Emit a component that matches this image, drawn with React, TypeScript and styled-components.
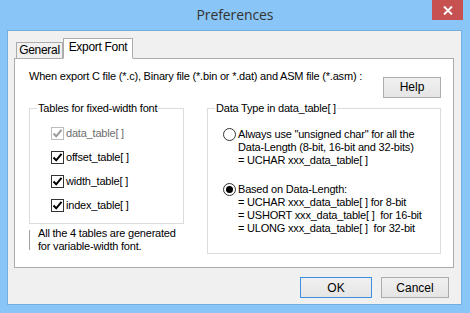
import React from "react";
import styled, { createGlobalStyle } from "styled-components";

const GlobalStyle = createGlobalStyle`
  html, body {
    margin: 0;
    padding: 0;
    background: #89c5f6;
  }
`;

const Frame = styled.div`
  width: 470px;
  height: 313px;
  background: #89c5f6;
  display: flex;
  flex-direction: column;
  font-family: "Liberation Sans", Arial, sans-serif;
  font-size: 11px;
  letter-spacing: -0.2px;
  color: #000;
  box-sizing: border-box;
`;

const TitleBar = styled.div`
  height: 30px;
  display: grid;
  grid-template-columns: 1fr auto 1fr;
  flex-shrink: 0;
`;

const Title = styled.div`
  grid-column: 2;
  font-family: "Open Sans", "Noto Sans", sans-serif;
  font-size: 14px;
  color: #333;
  line-height: 30px;
  letter-spacing: -0.1px;
`;

const CloseButton = styled.div`
  grid-column: 3;
  justify-self: end;
  width: 31px;
  height: 20px;
  margin-right: 7px;
  background: #c75050;
  display: flex;
  align-items: center;
  justify-content: center;
`;

const Client = styled.div`
  flex: 1;
  margin: 0 8px 8px 7px;
  background: #f0f0f0;
  border: 1px solid #74aede;
  padding: 7px 7px 0 6px;
  display: flex;
  flex-direction: column;
`;

const TabStrip = styled.div`
  display: flex;
  align-items: flex-end;
  padding-left: 2px;
  height: 20px;
`;

const Tab = styled.div<{ $active?: boolean; $width: number }>`
  position: relative;
  z-index: 1;
  box-sizing: border-box;
  width: ${(p) => p.$width}px;
  height: ${(p) => (p.$active ? "21px" : "16px")};
  margin-bottom: ${(p) => (p.$active ? "-1px" : "0")};
  border: 1px solid #acacac;
  border-bottom: ${(p) => (p.$active ? "1px solid #fff" : "none")};
  background: ${(p) => (p.$active ? "#fff" : "#f0f0f0")};
  line-height: ${(p) => (p.$active ? "17px" : "15px")};
  font-size: 12px;
  letter-spacing: -0.3px;
  text-align: center;
  white-space: nowrap;
`;

const Panel = styled.div`
  box-sizing: border-box;
  height: 210px;
  background: #fff;
  border: 1px solid #acacac;
  padding: 11px 12px 0 14px;
  display: flex;
  flex-direction: column;
`;

const TopRow = styled.div`
  display: flex;
  justify-content: space-between;
  align-items: flex-start;
  line-height: 13px;
  white-space: nowrap;
`;

const Button = styled.div<{ $default?: boolean; $width: number }>`
  box-sizing: border-box;
  width: ${(p) => p.$width}px;
  height: 21px;
  border: 1px solid ${(p) => (p.$default ? "#3c8fdf" : "#acacac")};
  background: linear-gradient(#f0f0f0, #e5e5e5);
  display: flex;
  align-items: center;
  justify-content: center;
  font-size: 12px;
  letter-spacing: 0;
`;

const HelpButton = styled(Button)`
  margin-top: 7px;
`;

const Columns = styled.div`
  display: flex;
  gap: 23px;
  margin-top: 4px;
  align-items: flex-start;
`;

const LeftColumn = styled.div`
  width: 155px;
  display: flex;
  flex-direction: column;
`;

const Group = styled.fieldset<{ $bottom: number }>`
  margin: 0;
  padding: 0 6px ${(p) => p.$bottom}px 7px;
  border: 1px solid #dcdcdc;
  min-width: 0;
  flex: 1;
  line-height: 13px;
  white-space: nowrap;
`;

const Caption = styled.legend`
  padding: 0 1px;
  line-height: 13px;
`;

const CheckList = styled.div`
  margin-left: 14px;
  padding-top: 6px;
  display: flex;
  flex-direction: column;
`;

const CheckRow = styled.div<{ $disabled?: boolean }>`
  height: 24px;
  display: flex;
  align-items: center;
  gap: 2px;
  color: ${(p) => (p.$disabled ? "#6d6d6d" : "#000")};
`;

const Box = styled.div<{ $disabled?: boolean }>`
  box-sizing: border-box;
  width: 13px;
  height: 13px;
  border: 1px solid ${(p) => (p.$disabled ? "#bcbcbc" : "#333")};
  background: #fff;
  display: flex;
  align-items: center;
  justify-content: center;
`;

const Note = styled.div`
  display: flex;
  margin-top: 3px;
  line-height: 13px;
`;

const Rule = styled.div`
  width: 1px;
  height: 20px;
  margin-top: 3px;
  background: #a0a0a0;
  margin-right: 8px;
`;

const RadioList = styled.div`
  margin-left: 8px;
  padding-top: 13px;
  display: flex;
  flex-direction: column;
  gap: 16px;
`;

const RadioRow = styled.div`
  display: flex;
  align-items: flex-start;
  gap: 2px;
  line-height: 13px;
`;

const Circle = styled.div<{ $checked?: boolean }>`
  box-sizing: border-box;
  width: 13px;
  height: 13px;
  flex-shrink: 0;
  border-radius: 50%;
  border: 1px solid #333;
  background: #fff;
  display: flex;
  align-items: center;
  justify-content: center;
  &::after {
    content: "";
    display: ${(p) => (p.$checked ? "block" : "none")};
    width: 7px;
    height: 7px;
    border-radius: 50%;
    background: #000;
  }
`;

const Footer = styled.div`
  display: flex;
  justify-content: flex-end;
  gap: 9px;
  margin-top: 9px;
  padding-right: 5px;
`;

const Check = ({ disabled }: { disabled?: boolean }) => (
  <svg width="11" height="11" viewBox="0 0 11 11">
    <path
      d="M1.5 5.5 L4.2 8.3 L9.5 1.8"
      fill="none"
      stroke={disabled ? "#9a9a9a" : "#000"}
      strokeWidth="2"
    />
  </svg>
);

const tables = [
  { name: "data_table[ ]", disabled: true },
  { name: "offset_table[ ]" },
  { name: "width_table[ ]" },
  { name: "index_table[ ]" },
];

export default function App() {
  return (
    <>
      <GlobalStyle />
      <Frame>
        <TitleBar>
          <Title>Preferences</Title>
          <CloseButton>
            <svg width="10" height="9" viewBox="0 0 10 9">
              <path d="M1 0.5 L9 8.5 M9 0.5 L1 8.5" stroke="#fff" strokeWidth="2" />
            </svg>
          </CloseButton>
        </TitleBar>
        <Client>
          <TabStrip>
            <Tab $width={47}>General</Tab>
            <Tab $active $width={70}>Export Font</Tab>
          </TabStrip>
          <Panel>
            <TopRow>
              <span>
                When export C file (*.c), Binary file (*.bin or *.dat) and ASM file (*.asm) :
              </span>
              <HelpButton $width={58}>Help</HelpButton>
            </TopRow>
            <Columns>
              <LeftColumn>
                <Group $bottom={6}>
                  <Caption>Tables for fixed-width font</Caption>
                  <CheckList>
                    {tables.map((t) => (
                      <CheckRow key={t.name} $disabled={t.disabled}>
                        <Box $disabled={t.disabled}>
                          <Check disabled={t.disabled} />
                        </Box>
                        {t.name}
                      </CheckRow>
                    ))}
                  </CheckList>
                </Group>
                <Note>
                  <Rule />
                  <div>
                    All the 4 tables are generated
                    <br />
                    for variable-width font.
                  </div>
                </Note>
              </LeftColumn>
              <Group $bottom={18}>
                <Caption>Data Type in data_table[ ]</Caption>
                <RadioList>
                  <RadioRow>
                    <Circle />
                    <div>
                      Always use "unsigned char" for all the
                      <br />
                      Data-Length (8-bit, 16-bit and 32-bits)
                      <br />= UCHAR xxx_data_table[ ]
                    </div>
                  </RadioRow>
                  <RadioRow>
                    <Circle $checked />
                    <div>
                      Based on Data-Length:
                      <br />= UCHAR xxx_data_table[ ] for 8-bit
                      <br />= USHORT xxx_data_table[ ]&nbsp; for 16-bit
                      <br />= ULONG xxx_data_table[ ]&nbsp; for 32-bit
                    </div>
                  </RadioRow>
                </RadioList>
              </Group>
            </Columns>
          </Panel>
          <Footer>
            <Button $default $width={72}>OK</Button>
            <Button $width={68}>Cancel</Button>
          </Footer>
        </Client>
      </Frame>
    </>
  );
}
